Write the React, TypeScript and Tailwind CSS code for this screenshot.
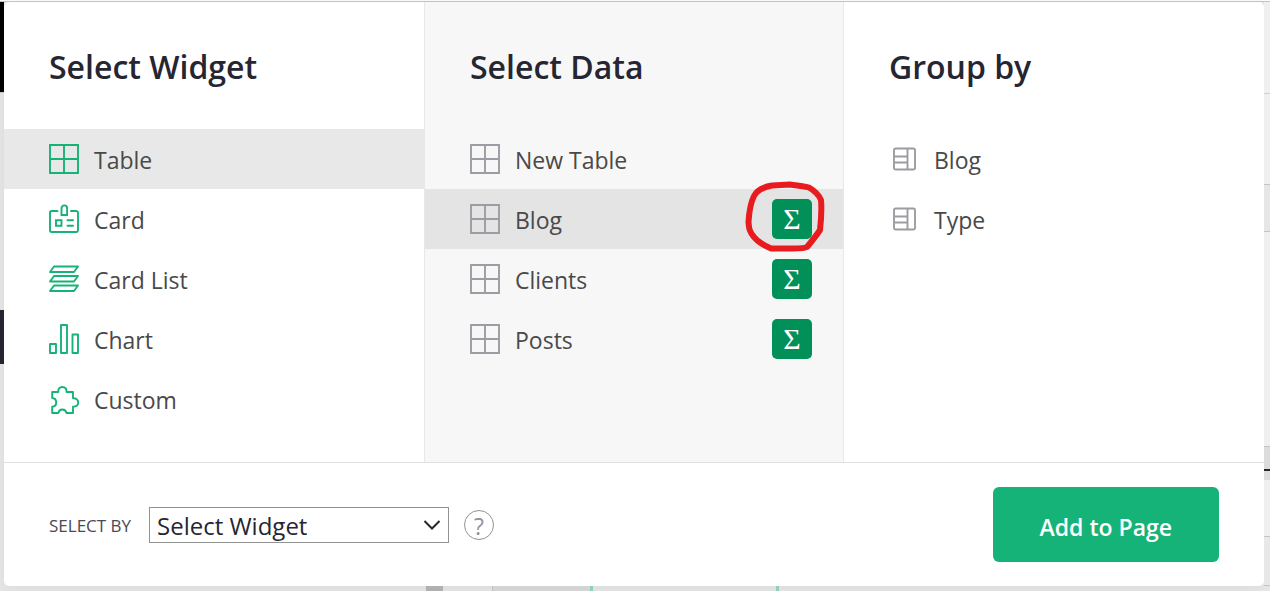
import type { ReactNode } from "react";

const Icon = ({ children, className = "" }: { children: ReactNode; className?: string }) => (
  <svg
    viewBox="0 0 30 30"
    className={`size-[30px] shrink-0 ${className}`}
    fill="none"
    stroke="currentColor"
    strokeWidth="1.9"
    aria-hidden="true"
  >
    {children}
  </svg>
);

const TableIcon = ({ className = "" }: { className?: string }) => (
  <Icon className={className}>
    <path d="M1 1h28v28H1zM15 1v28M1 15h28" />
  </Icon>
);

const CardIcon = () => (
  <Icon>
    <path
      strokeLinecap="round"
      d="M8.5 7H2.800A1.800 1.800 0 0 0 1 8.800V26.200A1.800 1.800 0 0 0 2.800 28H27.200A1.800 1.800 0 0 0 29 26.200V8.800A1.800 1.800 0 0 0 27.200 7H22"
    />
    <path d="M12.500 11V4.200a2.800 2.800 0 0 1 5.600 0V11zM7 16.200h5.500v5.500H7z" />
    <path strokeLinecap="round" d="M18.500 16.200h5.500M18.500 21.800h5.500" />
  </Icon>
);

const CardListIcon = () => (
  <Icon>
    <path strokeLinejoin="round" d="M5 2.500h24l-4 5.500H1zM5 12h24l-4 5.500H1zM5 21.500h24l-4 5.500H1z" />
  </Icon>
);

const ChartIcon = () => (
  <Icon>
    <path strokeLinejoin="round" d="M1 20h6v9H1zM12 1h6v28h-6zM23.500 10.500h5.500v18.500h-5.500z" />
  </Icon>
);

const CustomIcon = () => (
  <Icon>
    <path
      strokeLinejoin="round"
      d="M3.200 8H9.300C9 5 10.500 3 13.400 3S17.800 5 17.500 8H24V14.200C27 14 29.200 15.500 29.200 18.400S27 22.800 24 22.600V29H17.500C17 26.800 15.800 25.500 13.400 25.500S9.800 26.800 9.300 29H3.200V22.800C5.800 22.500 7.200 21 7.200 18.400S5.800 14.300 3.200 14z"
    />
  </Icon>
);

const ColumnIcon = () => (
  <Icon className="text-[#9c9ca2]">
    <rect x="5" y="4.500" width="21" height="21" rx="1.800" />
    <path d="M18.500 4.500v21M5 12.500h13.500M5 18.500h13.500" />
  </Icon>
);

const widgets = [
  { name: "Table", icon: <TableIcon /> },
  { name: "Card", icon: <CardIcon /> },
  { name: "Card List", icon: <CardListIcon /> },
  { name: "Chart", icon: <ChartIcon /> },
  { name: "Custom", icon: <CustomIcon /> },
];

const tables = [
  { name: "New Table", summary: false },
  { name: "Blog", summary: true },
  { name: "Clients", summary: true },
  { name: "Posts", summary: true },
];

const groupColumns = ["Blog", "Type"];

function Heading({ children }: { children: ReactNode }) {
  return <h2 className="h-[127px] px-[45px] pt-[43px] text-[32px] leading-11 font-semibold text-[#262633]">{children}</h2>;
}

// Hand drawn marker around a summary button
function Marker() {
  return (
    <svg
      viewBox="0 0 80 72"
      className="pointer-events-none absolute -top-[18px] -left-[27px] h-[72px] w-20 max-w-none"
      fill="none"
      stroke="#e81c1e"
      strokeWidth="6"
      strokeLinejoin="round"
      strokeLinecap="round"
      aria-hidden="true"
    >
      <path d="M27 4.500L45 3.500C54 4.500 59 5 64 6.500C70 10 74 14 76 19C77 30 76 40 75 49C71 55 67 60 62 66C58 68.500 48 67 26 67.500C18 64 12 60 9 56C4 50 4 47 3.500 41C4 32 5 23 9 15C12 9 18 6 27 4.500Z" />
    </svg>
  );
}

export default function App() {
  return (
    <div className="flex min-h-screen flex-col bg-[#e8e8e8] font-['Open_Sans','Noto_Sans',sans-serif] text-[23px] leading-8 text-[#494949]">
      <div className="h-[2px] border-b border-[#c8c8c8] bg-white" />
      <div className="flex flex-1">
        {/* Page behind the dialog, left edge */}
        <div className="flex w-1 shrink-0 flex-col">
          <div className="h-[90px] bg-black" />
          <div className="h-[218px] border-t border-[#cfcfcf]" />
          <div className="h-[54px] bg-[#262633]" />
        </div>

        <main
          role="dialog"
          aria-label="Add widget"
          className="flex flex-1 flex-col rounded-[5px] bg-white shadow-[0_2px_18px_rgba(38,38,51,0.08)]"
        >
          <div className="grid flex-1 grid-cols-3 border-b border-[#e0e0e0]">
            <section className="pb-[33px]">
              <Heading>Select Widget</Heading>
              {widgets.map((w, i) => (
                <button
                  key={w.name}
                  className={`flex h-15 w-full items-center gap-[15px] px-[45px] text-left ${i === 0 ? "bg-[#e8e8e8]" : ""}`}
                >
                  <span className="text-[#16b378]">{w.icon}</span>
                  <span className="pt-0.5">{w.name}</span>
                </button>
              ))}
            </section>

            <section className="border-x border-[#e8e8e8] bg-[#f7f7f7]">
              <Heading>Select Data</Heading>
              {tables.map((t, i) => (
                <div key={t.name} className={`flex h-15 items-center pr-[31px] ${i === 1 ? "bg-[#e4e4e4]" : ""}`}>
                  <button className="flex flex-1 items-center gap-[15px] pl-[45px] text-left">
                    <TableIcon className="text-[#9c9ca2]" />
                    <span className="pt-0.5">{t.name}</span>
                  </button>
                  {t.summary && (
                    <div className="relative">
                      <button
                        aria-label={`Summarize ${t.name}`}
                        className="flex size-10 items-center justify-center rounded-[5px] bg-[#009058] font-['Liberation_Serif',serif] text-3xl text-white"
                      >
                        Σ
                      </button>
                      {i === 1 && <Marker />}
                    </div>
                  )}
                </div>
              ))}
            </section>

            <section>
              <Heading>Group by</Heading>
              {groupColumns.map((c) => (
                <button key={c} className="flex h-15 w-full items-center gap-[15px] px-[45px] text-left">
                  <ColumnIcon />
                  <span className="pt-0.5">{c}</span>
                </button>
              ))}
            </section>
          </div>

          <footer className="flex items-center px-[45px] py-6">
            <label htmlFor="select-by" className="w-[100px] pt-0.5 text-[17px] text-[#494957]">
              SELECT BY
            </label>
            <div className="relative">
              <select
                id="select-by"
                className="block h-9 w-[300px] appearance-none border border-[#929292] bg-white pt-0.5 pl-[7px] text-2xl leading-8 text-[#262633]"
              >
                <option>Select Widget</option>
              </select>
              <svg
                viewBox="0 0 18 12"
                className="pointer-events-none absolute top-3 right-2 h-3 w-[18px]"
                fill="none"
                stroke="#262633"
                strokeWidth="2"
                aria-hidden="true"
              >
                <path d="M1.500 2L9 9.500L16.500 2" />
              </svg>
            </div>
            <button
              aria-label="Help"
              className="ml-[15px] flex size-[30px] items-center justify-center rounded-full border border-[#929299] pt-0.5 text-[23px] text-[#929299]"
            >
              ?
            </button>
            <button className="ml-auto h-[75px] rounded-md bg-[#16b378] px-[47px] pt-1 font-semibold text-white">
              Add to Page
            </button>
          </footer>
        </main>

        {/* Page behind the dialog, right edge */}
        <div className="flex w-1.5 shrink-0 flex-col bg-[#f0f0f0]">
          <div className="h-[91px]" />
          <div className="h-[91px] border-t border-[#d0d0d0]" />
          <div className="h-12 border-y border-[#c4c4c4] bg-[#e6e6e6]" />
          <div className="h-[214px]" />
          <div className="h-[34px] border-t border-[#c4c4c4] bg-[#dcdcdc] pt-[22px]">
            <div className="h-[2px] bg-[#262633]" />
          </div>
          <div className="h-14" />
          <div className="flex-1 border-y border-[#c4c4c4] bg-[#e8e8e8]" />
        </div>
      </div>

      {/* Page behind the dialog, bottom edge */}
      <div className="flex h-[5px]">
        <div className="w-[426px]" />
        <div className="w-[17px] bg-[#b0b0b0]" />
        <div className="w-[49px]" />
        <div className="w-[98px] border-l border-[#c0c0c0] bg-[#d4d4d4]" />
        <div className="w-[189px] border-x-3 border-[#90d0b8]" />
      </div>
    </div>
  );
}
